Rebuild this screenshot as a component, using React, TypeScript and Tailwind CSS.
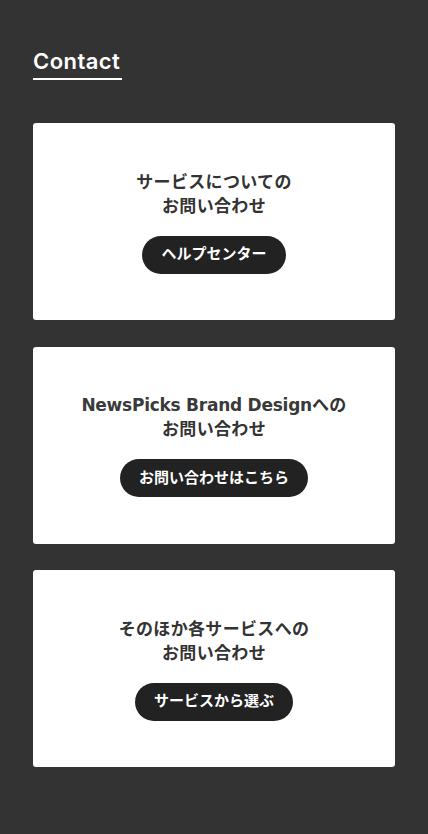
import React from "react";

const CARDS = [
  { lead: "", lines: ["サービスについての", "お問い合わせ"], button: "ヘルプセンター" },
  { lead: "NewsPicks Brand Design", lines: ["への", "お問い合わせ"], button: "お問い合わせはこちら" },
  { lead: "", lines: ["そのほか各サービスへの", "お問い合わせ"], button: "サービスから選ぶ" },
];

export default function App() {
  return (
    <div
      className="min-h-[834px] w-full bg-[#333333] px-[33px] pt-[46px] pb-[66px]"
      style={{ fontFamily: '"Inter", "Noto Sans CJK JP", sans-serif' }}
    >
      <div className="inline-block">
        <h2 className="text-[22px] font-semibold leading-[30px] text-white tracking-[0.02em]">Contact</h2>
        <div className="mt-[2px] h-[2px] w-[89px] bg-white" />
      </div>
      <div className="mt-[43px] flex flex-col gap-[26.5px]">
        {CARDS.map((c) => (
          <div
            key={c.button}
            className="flex h-[197px] flex-col items-center justify-center rounded-[3px] bg-white"
          >
            <p
              className="text-center text-[17px] font-semibold leading-[24px] tracking-[0.02em] text-[#333333]"
              style={{ fontFamily: '"DejaVu Sans", "Noto Sans CJK JP", sans-serif' }}
            >
              {c.lead && <span className="tracking-[-0.015em] text-[#3a3a3a]">{c.lead}</span>}
              {c.lines[0]}
              <br />
              {c.lines[1]}
            </p>
            <a
              href="#"
              className="mt-[18px] flex h-[38px] items-center rounded-full bg-[#222222] px-[19px] text-[15px] font-bold text-white"
            >
              {c.button}
            </a>
          </div>
        ))}
      </div>
    </div>
  );
}
